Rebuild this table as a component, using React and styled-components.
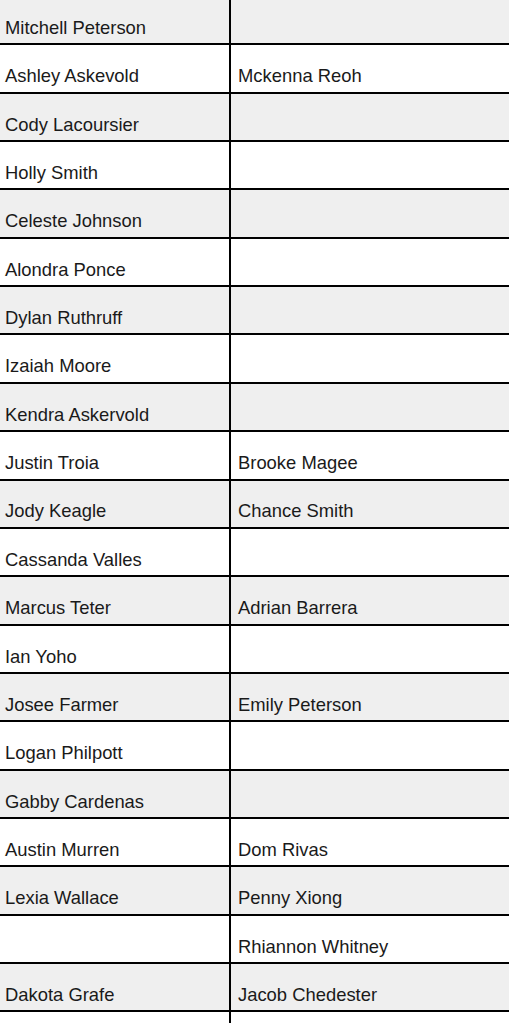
import React from 'react';
import styled, { createGlobalStyle } from 'styled-components';

const GlobalStyle = createGlobalStyle`
    html, body {
        margin: 0;
        padding: 0;
        background: #fff;
        overflow: hidden;
    }
    body {
        font-family: "Liberation Sans", Arial, sans-serif;
    }
`;

const Table = styled.div`
    width: 100%;
    margin-top: -3.1px;
`;

const Row = styled.div`
    display: grid;
    grid-template-columns: 231px 1fr;
    height: 48.37px;
    box-sizing: border-box;
    border-bottom: 2px solid #000;
    background: ${props => (props.$shaded ? '#efefef' : '#fff')};
`;

const Cell = styled.div`
    display: flex;
    align-items: flex-end;
    box-sizing: border-box;
    padding: 0 6px 5.4px ${props => (props.$left ? '5px' : '7px')};
    border-right: ${props => (props.$left ? '2px solid #000' : 'none')};
    font-size: 18.4px;
    line-height: 20px;
    color: #1a1a1a;
    white-space: nowrap;
`;

const rows = [
    ['Mitchell Peterson', ''],
    ['Ashley Askevold', 'Mckenna Reoh'],
    ['Cody Lacoursier', ''],
    ['Holly Smith', ''],
    ['Celeste Johnson', ''],
    ['Alondra Ponce', ''],
    ['Dylan Ruthruff', ''],
    ['Izaiah Moore', ''],
    ['Kendra Askervold', ''],
    ['Justin Troia', 'Brooke Magee'],
    ['Jody Keagle', 'Chance Smith'],
    ['Cassanda Valles', ''],
    ['Marcus Teter', 'Adrian Barrera'],
    ['Ian Yoho', ''],
    ['Josee Farmer', 'Emily Peterson'],
    ['Logan Philpott', ''],
    ['Gabby Cardenas', ''],
    ['Austin Murren', 'Dom Rivas'],
    ['Lexia Wallace', 'Penny Xiong'],
    ['', 'Rhiannon Whitney'],
    ['Dakota Grafe', 'Jacob Chedester'],
    ['', ''],
];

function App() {
    return (
        <>
            <GlobalStyle />
            <Table>
                {rows.map((row, i) => (
                    <Row key={i} $shaded={i % 2 === 0}>
                        <Cell $left>{row[0]}</Cell>
                        <Cell>{row[1]}</Cell>
                    </Row>
                ))}
            </Table>
        </>
    );
}

export default App;
